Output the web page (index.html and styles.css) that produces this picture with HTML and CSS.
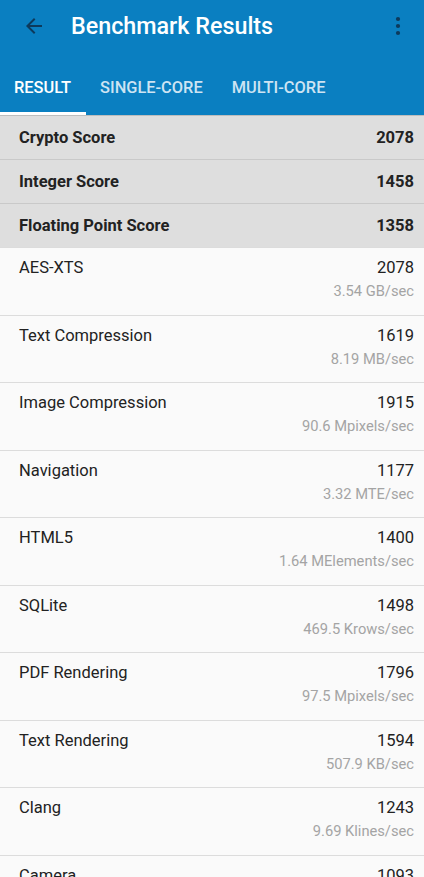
FILE: index.html
```html
<!DOCTYPE html>
<html>
<head>
<meta charset="utf-8">
<link rel="stylesheet" href="styles.css">
</head>
<body>
<header class="appbar">
  <div class="toolbar">
    <svg class="back" width="24" height="24" viewBox="0 0 24 24"><path d="M20 11H7.83l5.59-5.59L12 4l-8 8 8 8 1.41-1.41L7.83 13H20v-2z" fill="#0d3a5c"/></svg>
    <div class="title">Benchmark Results</div>
    <svg class="more" width="24" height="24" viewBox="0 0 24 24"><circle cx="12" cy="5" r="2.1" fill="#0d3a5c"/><circle cx="12" cy="12" r="2.1" fill="#0d3a5c"/><circle cx="12" cy="19" r="2.1" fill="#0d3a5c"/></svg>
  </div>
  <nav class="tabs">
    <div class="tab active">RESULT</div>
    <div class="tab">SINGLE-CORE</div>
    <div class="tab">MULTI-CORE</div>
  </nav>
</header>
<main>
  <div class="summary"><span>Crypto Score</span><span>2078</span></div>
  <div class="summary"><span>Integer Score</span><span>1458</span></div>
  <div class="summary"><span>Floating Point Score</span><span>1358</span></div>
  <div class="row"><div class="line"><span>AES-XTS</span><span>2078</span></div><div class="sub">3.54 GB/sec</div></div>
  <div class="row"><div class="line"><span>Text Compression</span><span>1619</span></div><div class="sub">8.19 MB/sec</div></div>
  <div class="row"><div class="line"><span>Image Compression</span><span>1915</span></div><div class="sub">90.6 Mpixels/sec</div></div>
  <div class="row"><div class="line"><span>Navigation</span><span>1177</span></div><div class="sub">3.32 MTE/sec</div></div>
  <div class="row"><div class="line"><span>HTML5</span><span>1400</span></div><div class="sub">1.64 MElements/sec</div></div>
  <div class="row"><div class="line"><span>SQLite</span><span>1498</span></div><div class="sub">469.5 Krows/sec</div></div>
  <div class="row"><div class="line"><span>PDF Rendering</span><span>1796</span></div><div class="sub">97.5 Mpixels/sec</div></div>
  <div class="row"><div class="line"><span>Text Rendering</span><span>1594</span></div><div class="sub">507.9 KB/sec</div></div>
  <div class="row"><div class="line"><span>Clang</span><span>1243</span></div><div class="sub">9.69 Klines/sec</div></div>
  <div class="row"><div class="line"><span>Camera</span><span>1093</span></div><div class="sub">10.2 images/sec</div></div>
</main>
</body>
</html>
```
FILE: styles.css
```css
* { box-sizing: border-box; }
html, body { margin: 0; padding: 0; }
body {
  width: 424px;
  height: 877px;
  overflow: hidden;
  background: #fafafa;
  font-family: Roboto, "Noto Sans", sans-serif;
  color: #212121;
}
.appbar {
  background: #0a7fc1;
  height: 115px;
  display: flex;
  flex-direction: column;
}
.toolbar {
  height: 52px;
  display: flex;
  align-items: center;
  padding: 0 14px 0 22px;
}
.back { flex: none; }
.title {
  margin-left: 25px;
  flex: 1;
  color: #fff;
  font-size: 23.3px;
  font-weight: 500;
}
.more { flex: none; }
.tabs {
  margin-top: 8px;
  height: 55px;
  display: flex;
}
.tab {
  display: flex;
  align-items: center;
  justify-content: center;
  padding: 2px 14.5px 0;
  color: #cde4f3;
  font-size: 16.4px;
  font-weight: 500;
  border-bottom: 3px solid transparent;
}
.tab.active {
  color: #fff;
  border-bottom-color: #fff;
  padding-left: 14px;
}
main {
  box-shadow: inset 0 2px 2px rgba(0,0,0,0.12);
}
.summary {
  height: 44px;
  background: #dedede;
  border-top: 1px solid #c9c9c9;
  display: flex;
  justify-content: space-between;
  align-items: center;
  padding: 0 10px 0 19px;
  font-weight: 700;
  font-size: 16.5px;
  color: #222;
}
.summary:first-child { border-top-color: #bdbdbd; }
.row {
  height: 67.5px;
  border-top: 1px solid #dcdcdc;
  padding: 9px 10px 0 19px;
  background: #fafafa;
}
.line {
  display: flex;
  justify-content: space-between;
  font-size: 16.5px;
  line-height: 22px;
  color: #222;
}
.sub {
  text-align: right;
  font-size: 14.7px;
  line-height: 24px;
  color: #a4a4a4;
}
```
